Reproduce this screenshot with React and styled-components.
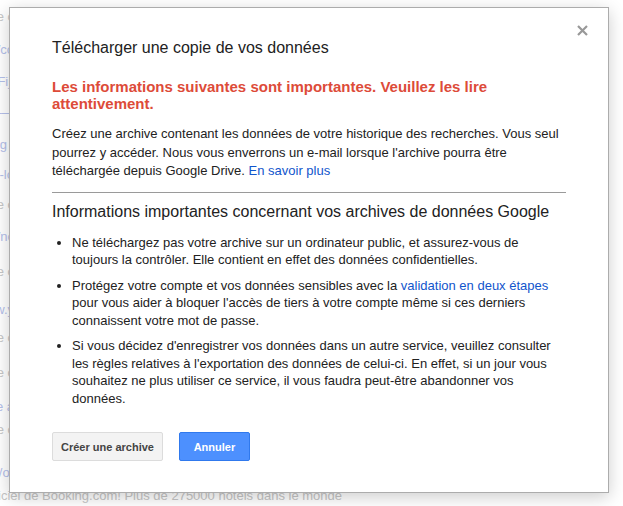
import React from "react";
import styled, { createGlobalStyle } from "styled-components";

const Global = createGlobalStyle`
  html, body { margin: 0; padding: 0; background: #fff; }
  body { font-family: "Liberation Sans", Arial, sans-serif; }
`;

const Page = styled.div`
  position: relative;
  width: 623px;
  height: 506px;
  overflow: hidden;
  background: #fff;
`;

const BgColumn = styled.div`
  display: flex;
  flex-direction: column;
  padding-top: 9px;
  font-size: 13px;
  line-height: 16px;
`;

const BgLine = styled.div`
  display: flex;
  justify-content: flex-end;
  white-space: nowrap;
  width: ${(p) => p.$width || 14}px;
  height: 16px;
  margin-top: ${(p) => p.$gap || 0}px;
  color: ${(p) => (p.$blue ? "#b4c0ea" : "#c6c6c6")};
`;

const Dialog = styled.div`
  position: absolute;
  left: 9px;
  top: 7px;
  width: 514px;
  padding: 30px 42px 31px 42px;
  background: #fff;
  border: 1px solid #acacac;
  box-shadow: 0 4px 16px rgba(0, 0, 0, 0.2);
  color: #222;
`;

const Close = styled.button`
  position: absolute;
  top: 16px;
  right: 20px;
  width: 12px;
  height: 12px;
  padding: 0;
  border: 0;
  background: transparent;
  display: flex;
  align-items: center;
  justify-content: center;
`;

const Title = styled.div`
  font-size: 16px;
  line-height: 20px;
  color: #222;
`;

const Warning = styled.div`
  margin-top: 21px;
  font-size: 15px;
  font-weight: bold;
  line-height: 16.5px;
  color: #dd4b39;
`;

const Para = styled.p`
  margin: 13px 0 0;
  font-size: 13px;
  line-height: 18.5px;
`;

const Link = styled.a`
  color: #1155cc;
  text-decoration: none;
`;

const Rule = styled.hr`
  margin: 11px 0 0;
  border: 0;
  border-top: 1px solid #9a9a9a;
  height: 0;
`;

const Heading = styled.div`
  margin-top: 9px;
  font-size: 16px;
  line-height: 20px;
`;

const List = styled.ul`
  margin: 12px 0 0;
  padding: 0 0 0 20px;
  font-size: 13px;
  line-height: 17.5px;
`;

const Item = styled.li`
  margin-top: ${(p) => (p.$first ? 0 : 8)}px;
`;

const Buttons = styled.div`
  display: flex;
  gap: 16px;
  margin-top: 25px;
`;

const Button = styled.button`
  height: 29px;
  padding: 0 8px;
  min-width: 71px;
  border-radius: 2px;
  font-family: "Liberation Sans", Arial, sans-serif;
  font-size: 11px;
  font-weight: bold;
  border: 1px solid ${(p) => (p.$primary ? "#3079ed" : "#dcdcdc")};
  background: ${(p) => (p.$primary ? "#4d90fe" : "#f3f3f3")};
  color: ${(p) => (p.$primary ? "#fff" : "#444")};
`;

const bgLines = [
  { t: "résultats de recherche e c", gap: 0 },
  { t: "www.booking.com/co", blue: true, gap: 17 },
  { t: "Hôtels pas chers à Fiji", blue: true, gap: 16 },
  { t: "———", blue: true, gap: 15 },
  { t: "Réservez en ligne g |", blue: true, gap: 16 },
  { t: "www.hotels-de-lo", blue: true, gap: 14 },
  { t: "Trouvez un hôtel e c", gap: 14 },
  { t: "www.expedia.fr/nc", blue: true, gap: 16 },
  { t: "Comparez les prix e c", gap: 19 },
  { t: "http://www.y", blue: true, gap: 22 },
  { t: "Offres spéciales e c", gap: 12 },
  { t: "Promotions de la e c", gap: 19 },
  { t: "Voyages à la carte a", blue: true, gap: 18 },
  { t: "Séjours partout e c", gap: 7 },
  { t: "www.hotels.com/or", blue: true, gap: 27 },
  { t: "Site officiel de Booking.com! Plus de 275000 hotels dans le monde", gap: 7, width: 342 },
];

export default function App() {
  return (
    <Page>
      <Global />
      <BgColumn>
        {bgLines.map((l, i) => (
          <BgLine key={i} $blue={l.blue} $gap={l.gap} $width={l.width}>
            <span>{l.t}</span>
          </BgLine>
        ))}
      </BgColumn>
      <Dialog>
        <Close aria-label="Fermer">
          <svg width="11" height="11" viewBox="0 0 11 11">
            <path d="M1 1L10 10M10 1L1 10" stroke="#999" strokeWidth="2.2" strokeLinecap="butt" />
          </svg>
        </Close>
        <Title>Télécharger une copie de vos données</Title>
        <Warning>
          Les informations suivantes sont importantes. Veuillez les lire attentivement.
        </Warning>
        <Para>
          Créez une archive contenant les données de votre historique des recherches. Vous seul
          pourrez y accéder. Nous vous enverrons un e-mail lorsque l'archive pourra être
          téléchargée depuis Google Drive. <Link href="#">En savoir plus</Link>
        </Para>
        <Rule />
        <Heading>Informations importantes concernant vos archives de données Google</Heading>
        <List>
          <Item $first>
            Ne téléchargez pas votre archive sur un ordinateur public, et assurez-vous de
            toujours la contrôler. Elle contient en effet des données confidentielles.
          </Item>
          <Item>
            Protégez votre compte et vos données sensibles avec la{" "}
            <Link href="#">validation en deux étapes</Link> pour vous aider à bloquer l'accès de
            tiers à votre compte même si ces derniers connaissent votre mot de passe.
          </Item>
          <Item>
            Si vous décidez d'enregistrer vos données dans un autre service, veuillez consulter
            les règles relatives à l'exportation des données de celui-ci. En effet, si un jour
            vous souhaitez ne plus utiliser ce service, il vous faudra peut-être abandonner vos
            données.
          </Item>
        </List>
        <Buttons>
          <Button>Créer une archive</Button>
          <Button $primary>Annuler</Button>
        </Buttons>
      </Dialog>
    </Page>
  );
}
